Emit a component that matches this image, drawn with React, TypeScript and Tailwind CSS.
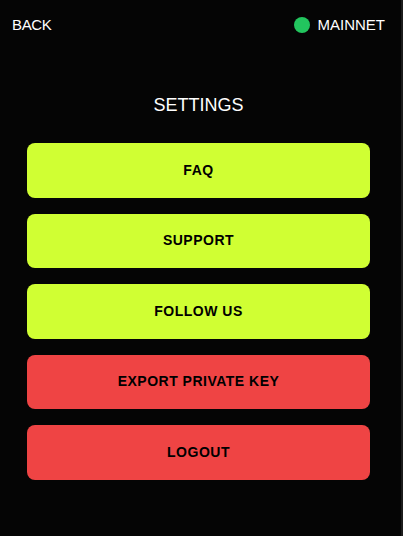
const buttons = [
  { label: "FAQ", danger: false },
  { label: "SUPPORT", danger: false },
  { label: "FOLLOW US", danger: false },
  { label: "EXPORT PRIVATE KEY", danger: true },
  { label: "LOGOUT", danger: true },
];

export default function App() {
  return (
    <div
      className="flex h-[536px] w-[403px] bg-[#050505] text-white"
      style={{ fontFamily: '"Liberation Sans", Arial, sans-serif' }}
    >
      <div className="flex w-[397px] flex-col">
        {/* header */}
        <div className="flex h-[50px] items-center justify-between px-3">
          <button className="text-[15px] tracking-tight">BACK</button>
          <div className="flex items-center gap-[8px]">
            <span className="h-4 w-4 rounded-full bg-[#22c55e]" />
            <span className="text-[15px]">MAINNET</span>
          </div>
        </div>

        <h1 className="mt-[41px] text-center text-[18px] leading-7">SETTINGS</h1>

        <div className="mt-6 flex flex-col gap-4 px-[27px]">
          {buttons.map((b) => (
            <button
              key={b.label}
              className={
                b.danger
                  ? "h-[54.5px] rounded-lg bg-[#ef4444] text-[14px] font-bold tracking-[0.5px] text-black"
                  : "h-[54.5px] rounded-lg bg-[#d0ff33] text-[14px] font-bold tracking-[0.5px] text-black"
              }
            >
              {b.label}
            </button>
          ))}
        </div>
      </div>
      <div className="w-[6px] border-r-2 border-[#1c1c1c]" />
    </div>
  );
}
